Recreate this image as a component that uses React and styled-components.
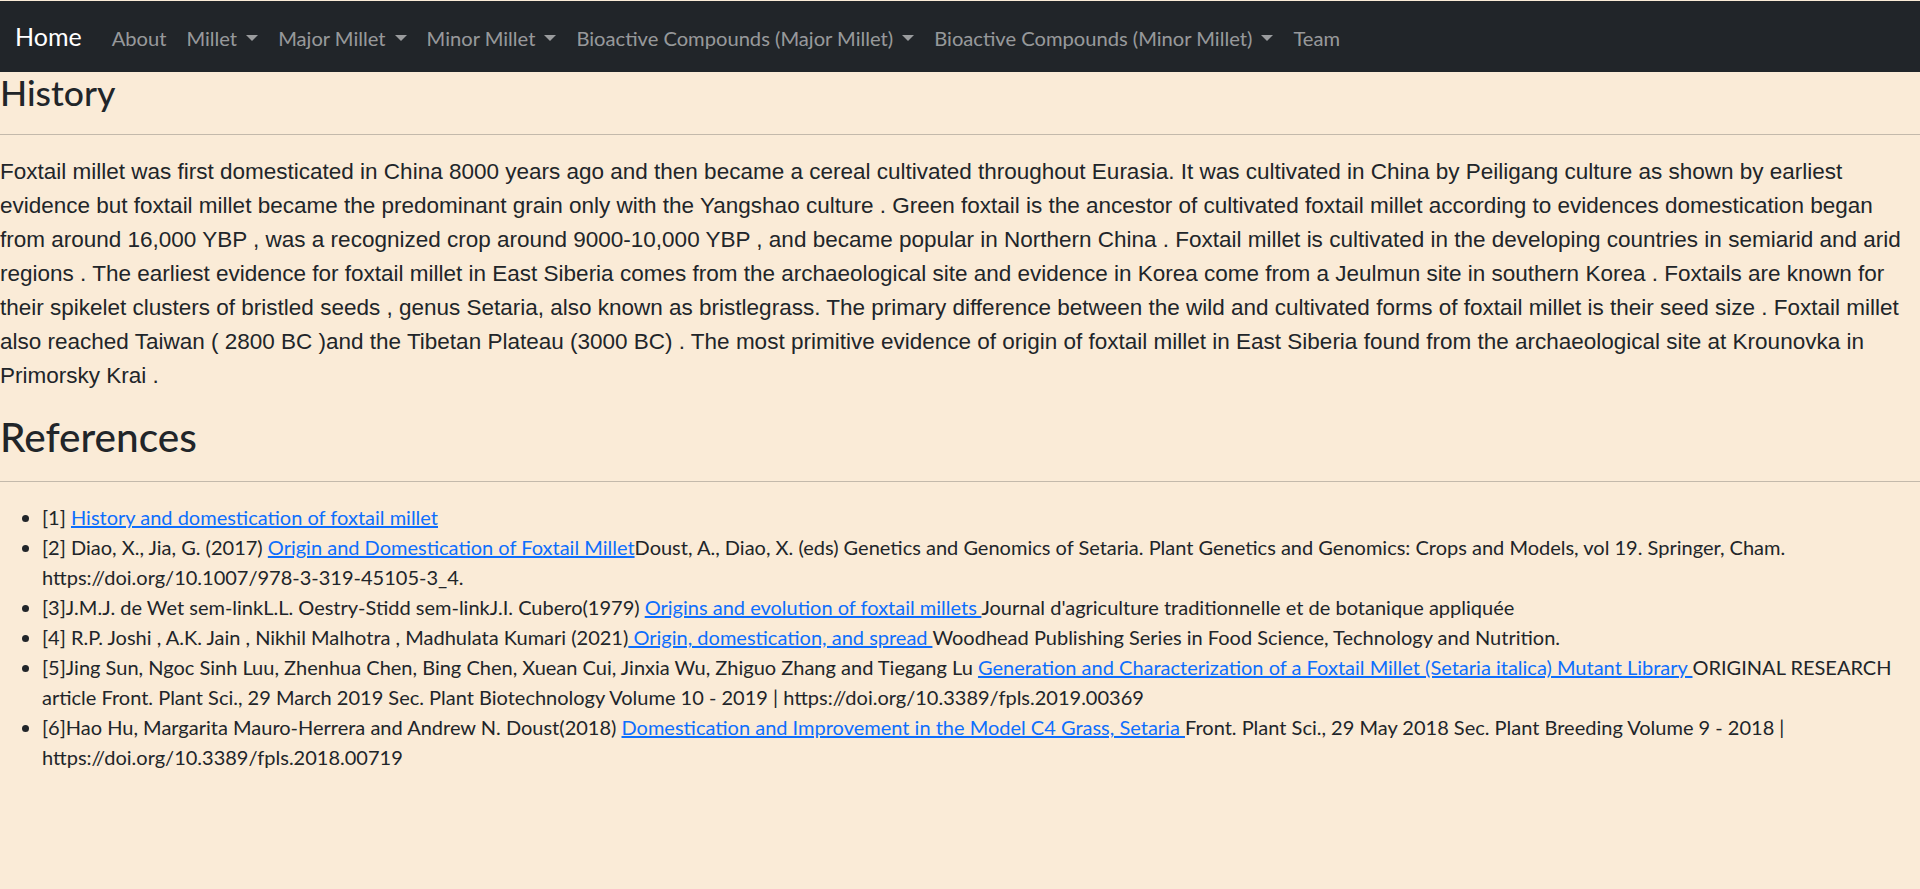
import styled, { createGlobalStyle } from "styled-components";

const GlobalStyle = createGlobalStyle`
    html, body {
        margin: 0;
        padding: 0;
        background: #faebd7;
    }
    body {
        font-family: Lato, "Noto Sans", sans-serif;
        color: #212529;
        font-size: 20px;
        line-height: 1.5;
    }
    *, *::before, *::after {
        box-sizing: border-box;
    }
`;

const navLinks = [
    { label: "About" },
    { label: "Millet", drop: true },
    { label: "Major Millet", drop: true },
    { label: "Minor Millet", drop: true },
    { label: "Bioactive Compounds (Major Millet)", drop: true },
    { label: "Bioactive Compounds (Minor Millet)", drop: true },
    { label: "Team" },
];

const history =
    "Foxtail millet was first domesticated in China 8000 years ago and then became a cereal cultivated throughout Eurasia. It was cultivated in China by Peiligang culture as shown by earliest evidence but foxtail millet became the predominant grain only with the Yangshao culture . Green foxtail is the ancestor of cultivated foxtail millet according to evidences domestication began from around 16,000 YBP , was a recognized crop around 9000-10,000 YBP , and became popular in Northern China . Foxtail millet is cultivated in the developing countries in semiarid and arid regions . The earliest evidence for foxtail millet in East Siberia comes from the archaeological site and evidence in Korea come from a Jeulmun site in southern Korea . Foxtails are known for their spikelet clusters of bristled seeds , genus Setaria, also known as bristlegrass. The primary difference between the wild and cultivated forms of foxtail millet is their seed size . Foxtail millet also reached Taiwan ( 2800 BC )and the Tibetan Plateau (3000 BC) . The most primitive evidence of origin of foxtail millet in East Siberia found from the archaeological site at Krounovka in Primorsky Krai .";

const references = [
    { before: "[1] ", link: "History and domestication of foxtail millet", after: "" },
    {
        before: "[2] Diao, X., Jia, G. (2017) ",
        link: "Origin and Domestication of Foxtail Millet",
        after: "Doust, A., Diao, X. (eds) Genetics and Genomics of Setaria. Plant Genetics and Genomics: Crops and Models, vol 19. Springer, Cham. https://doi.org/10.1007/978-3-319-45105-3_4.",
    },
    {
        before: "[3]J.M.J. de Wet sem-linkL.L. Oestry-Stidd sem-linkJ.I. Cubero(1979) ",
        link: "Origins and evolution of foxtail millets ",
        after: "Journal d'agriculture traditionnelle et de botanique appliquée",
    },
    {
        before: "[4] R.P. Joshi , A.K. Jain , Nikhil Malhotra , Madhulata Kumari (2021)",
        link: " Origin, domestication, and spread ",
        after: "Woodhead Publishing Series in Food Science, Technology and Nutrition.",
    },
    {
        before: "[5]Jing Sun, Ngoc Sinh Luu, Zhenhua Chen, Bing Chen, Xuean Cui, Jinxia Wu, Zhiguo Zhang and Tiegang Lu ",
        link: "Generation and Characterization of a Foxtail Millet (Setaria italica) Mutant Library ",
        after: "ORIGINAL RESEARCH article Front. Plant Sci., 29 March 2019 Sec. Plant Biotechnology Volume 10 - 2019 | https://doi.org/10.3389/fpls.2019.00369",
    },
    {
        before: "[6]Hao Hu, Margarita Mauro-Herrera and Andrew N. Doust(2018) ",
        link: "Domestication and Improvement in the Model C4 Grass, Setaria ",
        after: "Front. Plant Sci., 29 May 2018 Sec. Plant Breeding Volume 9 - 2018 | https://doi.org/10.3389/fpls.2018.00719",
    },
];

const App = () => {
    return (
        <>
            <GlobalStyle />
            <Navbar>
                <Brand href="#">Home</Brand>
                <NavList>
                    {navLinks.map((item) => (
                        <NavLink key={item.label} href="#" $drop={item.drop}>
                            {item.label}
                        </NavLink>
                    ))}
                </NavList>
            </Navbar>

            <Main>
                <Heading $size={35.5} $line={42}>History</Heading>
                <Rule />
                <Story>{history}</Story>

                <Heading $size={40.5} $line={48}>References</Heading>
                <Rule />
                <RefList>
                    {references.map((ref, index) => (
                        <li key={index}>
                            {ref.before}
                            <a href="#">{ref.link}</a>
                            {ref.after}
                        </li>
                    ))}
                </RefList>
            </Main>
        </>
    );
};

export default App;

const Navbar = styled.nav`
    display: flex;
    align-items: center;
    height: 71px;
    margin-top: 1px;
    padding: 0 15px;
    background: #212529;
`;

const Brand = styled.a`
    font-size: 25px;
    line-height: 37px;
    color: #fff;
    text-decoration: none;
    margin-right: 20px;
`;

const NavList = styled.div`
    display: flex;
    align-items: center;
    padding-top: 3px;
`;

const NavLink = styled.a`
    padding: 10px;
    font-size: 20.15px;
    line-height: 30px;
    color: rgba(255, 255, 255, 0.55);
    text-decoration: none;
    white-space: nowrap;

    ${(p) =>
        p.$drop &&
        `
        &::after{
            content: "";
            display: inline-block;
            margin-left: 0.45em;
            vertical-align: 0.255em;
            border-top: 0.3em solid;
            border-left: 0.3em solid transparent;
            border-right: 0.3em solid transparent;
        }
    `}
`;

const Main = styled.main`
    display: flex;
    flex-direction: column;
`;

const Heading = styled.h2`
    margin: 0;
    font-size: ${(p) => p.$size}px;
    font-weight: 500;
    line-height: ${(p) => p.$line}px;
`;

const Rule = styled.hr`
    margin: 20px 0;
    border: 0;
    border-top: 1px solid #212529;
    opacity: 0.25;
`;

const Story = styled.p`
    margin: 0 0 20px;
    font-family: "Liberation Sans", Arial, sans-serif;
    font-size: 22.5px;
    line-height: 34px;
`;

const RefList = styled.ul`
    margin: 0;
    padding-left: 42px;
    font-size: 20px;
    line-height: 30px;

    a {
        color: #0d6efd;
        text-decoration: underline;
    }
`;
